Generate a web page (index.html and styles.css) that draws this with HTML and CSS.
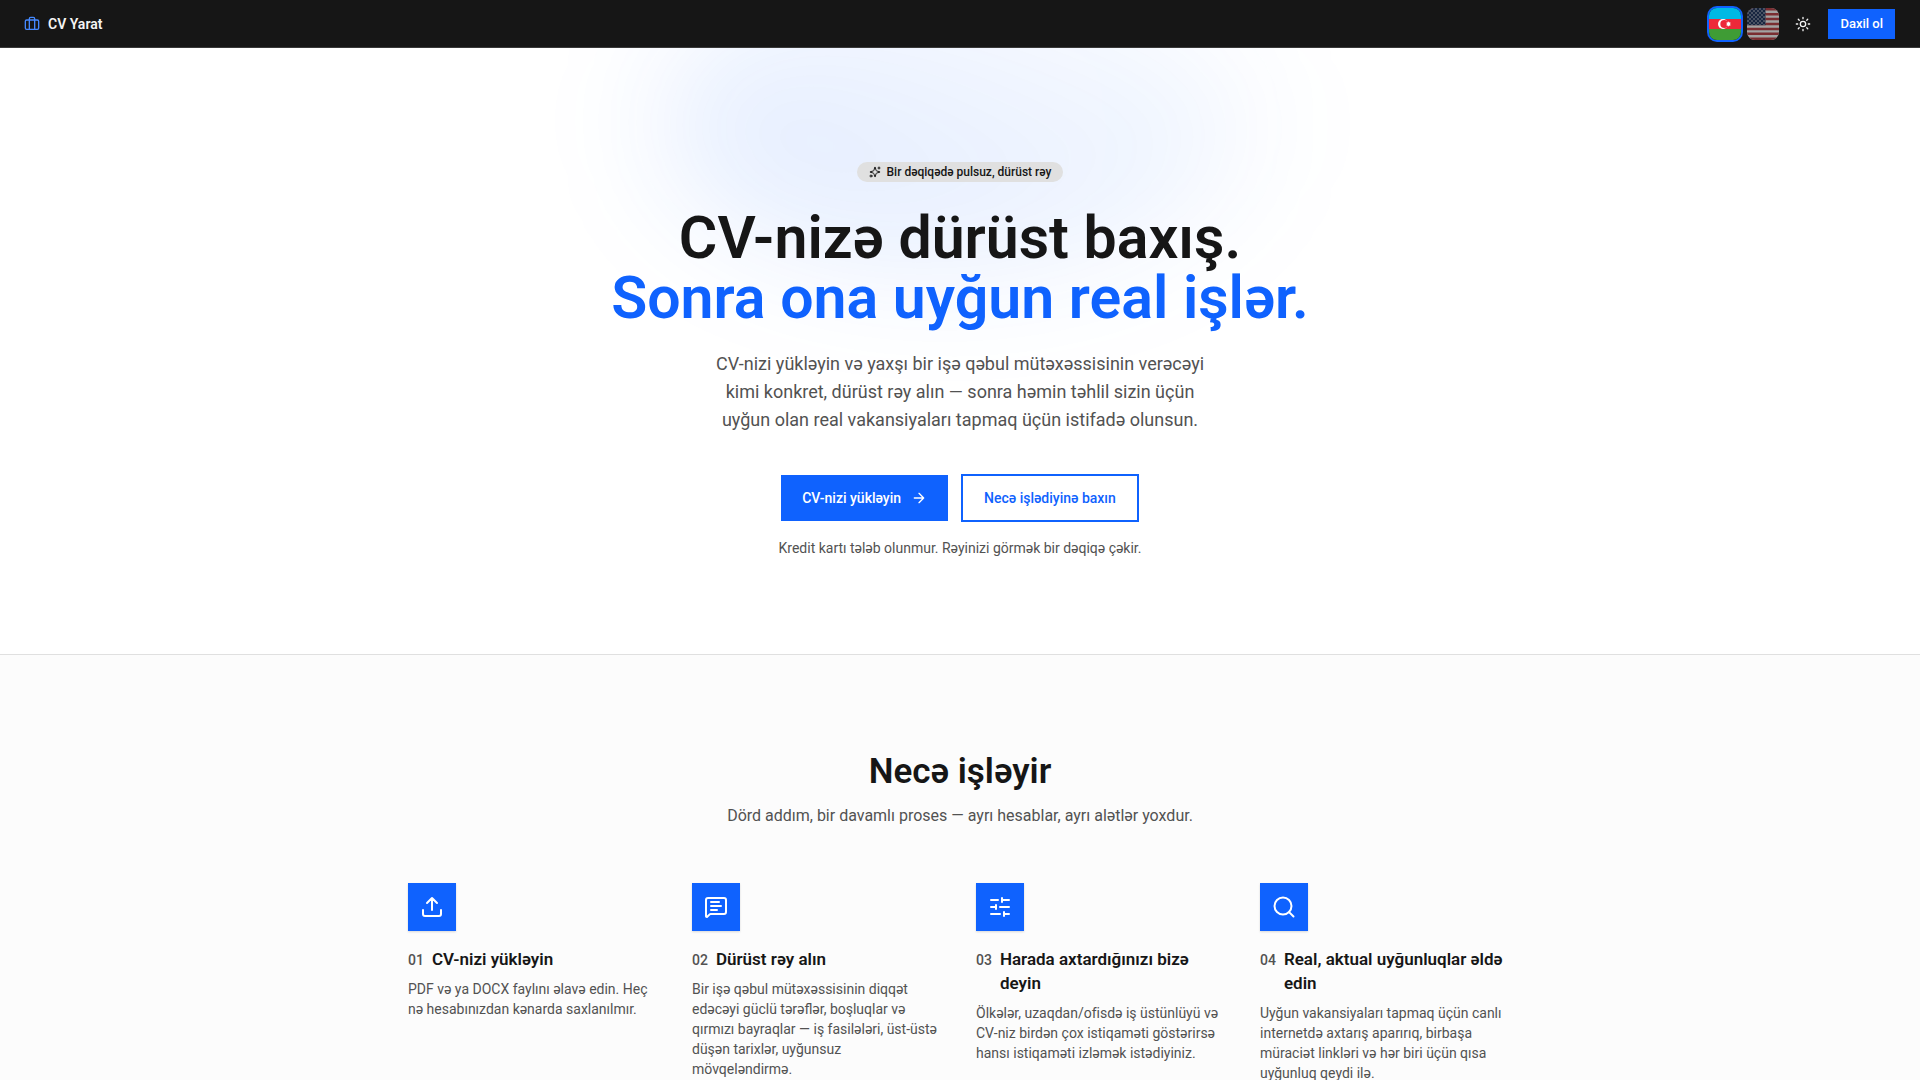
FILE: index.html
```html
<!DOCTYPE html>
<html lang="az">
<head>
    <meta charset="UTF-8">
    <meta name="viewport" content="width=device-width, initial-scale=1.0">
    <title>CV Yarat</title>
    <link rel="stylesheet" href="styles.css">
</head>
<body>
    <header class="header">
        <a class="brand" href="#">
            <svg class="icon brand-icon" viewBox="0 0 24 24"><path d="M16 20V4a2 2 0 0 0-2-2h-4a2 2 0 0 0-2 2v16"/><rect width="20" height="14" x="2" y="6" rx="2"/></svg>
            CV Yarat
        </a>
        <div class="header-actions">
            <div class="languages">
                <button class="flag active" aria-label="Azərbaycan dili">
                    <svg viewBox="0 0 32 32">
                        <rect width="32" height="11" fill="#00b9e4"/>
                        <rect y="11" width="32" height="10" fill="#ed2939"/>
                        <rect y="21" width="32" height="11" fill="#3f9c35"/>
                        <circle cx="14" cy="16" r="5" fill="#fff"/>
                        <circle cx="15.3" cy="16" r="4" fill="#ed2939"/>
                        <path fill="#fff" d="M19.5 13.2l.6 1.4 1.4-.6-.6 1.4 1.4.6-1.4.6.6 1.4-1.4-.6-.6 1.4-.6-1.4-1.4.6.6-1.4-1.4-.6 1.4-.6-.6-1.4 1.4.6z"/>
                    </svg>
                </button>
                <button class="flag" aria-label="English">
                    <svg viewBox="0 0 32 32">
                        <defs>
                            <pattern id="stars" width="4" height="4" patternUnits="userSpaceOnUse">
                                <circle cx="1" cy="1" r=".7" fill="#fff"/>
                                <circle cx="3" cy="3" r=".7" fill="#fff"/>
                            </pattern>
                        </defs>
                        <rect width="32" height="32" fill="#fff"/>
                        <path stroke="#bd3d44" stroke-width="2.46" d="M0 1.23h32M0 6.15h32M0 11.08h32M0 16h32M0 20.92h32M0 25.85h32M0 30.77h32"/>
                        <rect width="18.5" height="17.2" fill="#192f5d"/>
                        <rect width="18.5" height="17.2" fill="url(#stars)"/>
                    </svg>
                </button>
            </div>
            <button class="theme" aria-label="Mövzu">
                <svg class="icon" viewBox="0 0 24 24"><circle cx="12" cy="12" r="4"/><path d="M12 2v2M12 20v2M4.93 4.93l1.41 1.41M17.66 17.66l1.41 1.41M2 12h2M20 12h2M6.34 17.66l-1.41 1.41M19.07 4.93l-1.41 1.41"/></svg>
            </button>
            <button class="login">Daxil ol</button>
        </div>
    </header>

    <main>
        <section class="hero">
            <div class="glow"></div>
            <div class="hero-content">
                <span class="badge">
                    <svg class="icon" viewBox="0 0 24 24"><path d="M9.94 15.5A2 2 0 0 0 8.5 14.06l-6.14-1.58a.5.5 0 0 1 0-.96L8.5 9.94A2 2 0 0 0 9.94 8.5l1.58-6.14a.5.5 0 0 1 .96 0l1.58 6.14a2 2 0 0 0 1.44 1.44l6.14 1.58a.5.5 0 0 1 0 .96l-6.14 1.58a2 2 0 0 0-1.44 1.44l-1.58 6.14a.5.5 0 0 1-.96 0z"/><path d="M20 2v4M22 4h-4"/><circle cx="4" cy="20" r="2"/></svg>
                    Bir dəqiqədə pulsuz, dürüst rəy
                </span>
                <h1>CV-nizə dürüst baxış.<br><span class="accent">Sonra ona uyğun real işlər.</span></h1>
                <p class="lead">CV-nizi yükləyin və yaxşı bir işə qəbul mütəxəssisinin verəcəyi kimi konkret, dürüst rəy alın — sonra həmin təhlil sizin üçün uyğun olan real vakansiyaları tapmaq üçün istifadə olunsun.</p>
                <div class="hero-buttons">
                    <a class="btn btn-primary" href="#">
                        CV-nizi yükləyin
                        <svg class="icon" viewBox="0 0 24 24"><path d="M5 12h14M12 5l7 7-7 7"/></svg>
                    </a>
                    <a class="btn btn-outline" href="#nece-isleyir">Necə işlədiyinə baxın</a>
                </div>
                <p class="note">Kredit kartı tələb olunmur. Rəyinizi görmək bir dəqiqə çəkir.</p>
            </div>
        </section>

        <section class="how" id="nece-isleyir">
            <h2>Necə işləyir</h2>
            <p class="how-intro">Dörd addım, bir davamlı proses — ayrı hesablar, ayrı alətlər yoxdur.</p>
            <div class="steps">
                <article class="step">
                    <div class="step-icon">
                        <svg class="icon" viewBox="0 0 24 24"><path d="M12 3v12M17 8l-5-5-5 5M21 15v4a2 2 0 0 1-2 2H5a2 2 0 0 1-2-2v-4"/></svg>
                    </div>
                    <div class="step-head"><span class="step-number">01</span><h3>CV-nizi yükləyin</h3></div>
                    <p>PDF və ya DOCX faylını əlavə edin. Heç nə hesabınızdan kənarda saxlanılmır.</p>
                </article>
                <article class="step">
                    <div class="step-icon">
                        <svg class="icon" viewBox="0 0 24 24"><path d="M22 17a2 2 0 0 1-2 2H6.83a2 2 0 0 0-1.42.59l-2.2 2.2A.71.71 0 0 1 2 21.29V5a2 2 0 0 1 2-2h16a2 2 0 0 1 2 2zM7 7h8M7 11h10M7 15h6"/></svg>
                    </div>
                    <div class="step-head"><span class="step-number">02</span><h3>Dürüst rəy alın</h3></div>
                    <p>Bir işə qəbul mütəxəssisinin diqqət edəcəyi güclü tərəflər, boşluqlar və qırmızı bayraqlar — iş fasilələri, üst-üstə düşən tarixlər, uyğunsuz mövqeləndirmə.</p>
                </article>
                <article class="step">
                    <div class="step-icon">
                        <svg class="icon" viewBox="0 0 24 24"><path d="M10 5H3M12 19H3M14 3v4M16 17v4M21 12h-9M21 19h-5M21 5h-7M8 10v4M8 12H3"/></svg>
                    </div>
                    <div class="step-head"><span class="step-number">03</span><h3>Harada axtardığınızı bizə deyin</h3></div>
                    <p>Ölkələr, uzaqdan/ofisdə iş üstünlüyü və CV-niz birdən çox istiqaməti göstərirsə hansı istiqaməti izləmək istədiyiniz.</p>
                </article>
                <article class="step">
                    <div class="step-icon">
                        <svg class="icon" viewBox="0 0 24 24"><circle cx="11" cy="11" r="8.5"/><path d="M21.5 21.5l-4.4-4.4"/></svg>
                    </div>
                    <div class="step-head"><span class="step-number">04</span><h3>Real, aktual uyğunluqlar əldə edin</h3></div>
                    <p>Uyğun vakansiyaları tapmaq üçün canlı internetdə axtarış aparırıq, birbaşa müraciət linkləri və hər biri üçün qısa uyğunluq qeydi ilə.</p>
                </article>
            </div>
        </section>
    </main>
</body>
</html>
```
FILE: styles.css
```css
* {
    box-sizing: border-box;
}
body {
    margin: 0;
    font-family: Roboto, "Noto Sans", sans-serif;
    font-size: 14px;
    line-height: 20px;
    color: #161616;
    background-color: #ffffff;
}
h1, h2, h3, p {
    margin: 0;
}
a {
    text-decoration: none;
}
button {
    border: none;
    padding: 0;
    font-family: inherit;
    cursor: pointer;
}
.icon {
    width: 16px;
    height: 16px;
    flex-shrink: 0;
    fill: none;
    stroke: currentColor;
    stroke-width: 2;
    stroke-linecap: round;
    stroke-linejoin: round;
}

/* Header */
.header {
    display: flex;
    justify-content: space-between;
    align-items: center;
    height: 48px;
    padding: 0 25px 0 24px;
    background-color: #161616;
    border-bottom: 1px solid #393939;
}
.brand {
    display: flex;
    align-items: center;
    gap: 8px;
    color: #f4f4f4;
    font-weight: 600;
}
.brand-icon {
    color: #4589ff;
}
.header-actions, .languages {
    display: flex;
    align-items: center;
}
.languages {
    gap: 6px;
}
.flag {
    width: 32px;
    height: 32px;
    border-radius: 8px;
    overflow: hidden;
    background: none;
    opacity: 0.6;
}
.flag svg {
    display: block;
}
.flag.active {
    opacity: 1;
    box-shadow: 0 0 0 2px #0f62fe;
}
.theme {
    display: flex;
    align-items: center;
    justify-content: center;
    width: 32px;
    height: 32px;
    margin: 0 9px 0 8px;
    color: #f4f4f4;
    background: none;
}
.login {
    height: 30px;
    padding: 0 12px;
    font-size: 13px;
    font-weight: 500;
    color: #ffffff;
    background-color: #0f62fe;
}

/* Hero */
.hero {
    position: relative;
    overflow: hidden;
    padding: 114px 24px 96px;
    border-bottom: 1px solid #e0e0e0;
}
.glow {
    position: absolute;
    top: -80px;
    left: 50%;
    width: 600px;
    height: 300px;
    margin-left: -300px;
    border-radius: 50%;
    background: linear-gradient(to top right, rgba(15, 98, 254, 0.14), rgba(69, 137, 255, 0.02));
    filter: blur(60px);
}
.hero-content {
    position: relative;
    display: flex;
    flex-direction: column;
    align-items: center;
    text-align: center;
}
.badge {
    display: flex;
    align-items: center;
    gap: 6px;
    height: 20px;
    padding: 0 12px;
    border-radius: 10px;
    font-size: 12px;
    font-weight: 500;
    line-height: 16px;
    background-color: #e0e0e0;
}
.badge .icon {
    width: 12px;
    height: 12px;
}
h1 {
    margin-top: 26px;
    font-size: 59px;
    font-weight: 600;
    line-height: 60px;
}
.accent {
    color: #0f62fe;
}
.lead {
    max-width: 512px;
    margin-top: 22px;
    font-size: 18px;
    line-height: 28px;
    color: #525252;
}
.hero-buttons {
    display: flex;
    align-items: center;
    flex-wrap: wrap;
    justify-content: center;
    gap: 13px;
    margin-top: 40px;
}
.btn {
    display: flex;
    align-items: center;
    gap: 10px;
    height: 46px;
    padding: 0 21px;
    font-weight: 500;
}
.btn-primary {
    color: #ffffff;
    background-color: #0f62fe;
}
.btn-outline {
    height: 48px;
    border: 2px solid #0f62fe;
    color: #0f62fe;
}
.note {
    margin-top: 16px;
    color: #525252;
}

/* Steps */
.how {
    padding: 97px 24px 96px;
    background-color: #fcfcfc;
    text-align: center;
}
h2 {
    font-size: 35px;
    font-weight: 600;
    line-height: 40px;
}
.how-intro {
    margin-top: 12px;
    font-size: 16px;
    line-height: 24px;
    color: #525252;
}
.steps {
    display: grid;
    grid-template-columns: repeat(4, 1fr);
    gap: 32px;
    max-width: 1104px;
    margin: 55px auto 0;
    text-align: left;
}
.step-icon {
    display: flex;
    align-items: center;
    justify-content: center;
    width: 48px;
    height: 48px;
    color: #ffffff;
    background-color: #0f62fe;
    box-shadow: 0 1px 2px rgba(0, 0, 0, 0.15);
}
.step-icon .icon {
    width: 24px;
    height: 24px;
}
.step-head {
    display: flex;
    align-items: baseline;
    gap: 8px;
    margin-top: 16px;
}
.step-number {
    font-weight: 500;
    color: #525252;
}
h3 {
    font-size: 17px;
    font-weight: 600;
    line-height: 24px;
}
.step p {
    margin-top: 8px;
    color: #525252;
}
@media (max-width: 900px) {
    .steps {
        grid-template-columns: repeat(2, 1fr);
    }
}
```
